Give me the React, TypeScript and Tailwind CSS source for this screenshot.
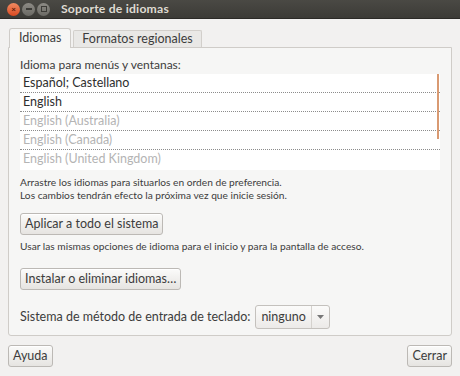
import React from 'react';

const font = { fontFamily: 'Lato, "Noto Sans", sans-serif' };

const langs = [
  { name: 'Español; Castellano', active: true },
  { name: 'English', active: true },
  { name: 'English (Australia)', active: false },
  { name: 'English (Canada)', active: false },
  { name: 'English (United Kingdom)', active: false },
];

const Button: React.FC<{ children: React.ReactNode; className?: string }> = ({ children, className = '' }) => (
  <button
    className={`h-[22px] px-[4px] text-[12.5px] text-[#3c3c3c] leading-none border border-[#bcb9b5] rounded-[3px] bg-gradient-to-b from-[#fbfbfa] to-[#e6e4e1] shadow-[inset_0_1px_0_#fff] ${className}`}
  >
    {children}
  </button>
);

export default function App() {
  return (
    <div className="w-[460px] h-[376px] bg-[#f2f1f0] flex flex-col overflow-hidden" style={font}>
      {/* Title bar */}
      <div className="h-[19px] bg-gradient-to-b from-[#4a4944] to-[#3c3b37] flex items-center pl-[7px] border-b border-[#2b2a27]">
        <div className="flex items-center gap-[2px]">
          <span className="w-[13px] h-[13px] rounded-full bg-gradient-to-b from-[#f08a60] to-[#d9481f] flex items-center justify-center text-[8px] leading-none text-[#5a1a08] font-bold">×</span>
          <span className="w-[13px] h-[13px] rounded-full bg-gradient-to-b from-[#8d8b85] to-[#6a6964] flex items-center justify-center">
            <span className="w-[6px] h-[2px] bg-[#3c3b37]" />
          </span>
          <span className="w-[13px] h-[13px] rounded-full bg-gradient-to-b from-[#8d8b85] to-[#6a6964] flex items-center justify-center">
            <span className="w-[6px] h-[6px] border border-[#3c3b37]" />
          </span>
        </div>
        <span className="ml-[11px] text-[12.2px] font-bold text-[#dfdbd2] tracking-[0.2px]">Soporte de idiomas</span>
      </div>

      {/* Tabs */}
      <div className="flex items-end pl-[9px] mt-[9px] h-[19px]">
        <div className="h-[20px] px-[9px] flex items-center text-[12.5px] text-[#3c3c3c] bg-[#f6f6f5] border border-b-0 border-[#cfccc8] rounded-t-[3px] relative z-10 -mb-px">
          Idiomas
        </div>
        <div className="h-[17px] ml-[2px] px-[8px] flex items-center text-[12.5px] text-[#3c3c3c] bg-[#e9e8e6] border border-b-0 border-[#d2cfcb] rounded-t-[2px]">
          Formatos regionales
        </div>
      </div>

      {/* Notebook panel */}
      <div className="mx-[8px] h-[289px] bg-[#f6f6f5] border border-[#cfccc8] rounded-b-[3px] px-[11px] pt-[10px] text-[#3c3c3c]">
        <div className="text-[12px] leading-[14px]">Idioma para menús y ventanas:</div>
        <div className="mt-[2px] bg-white relative h-[96px]">
          {langs.map((l, i) => (
            <div
              key={l.name}
              className={`h-[19px] pl-[3px] flex items-center text-[12.5px] ${l.active ? 'text-[#2e2e2e]' : 'text-[#b4b4b4]'} ${i < langs.length - 1 ? 'border-b border-dotted border-[#8c8c8c]' : ''}`}
            >
              {l.name}
            </div>
          ))}
          <div className="absolute right-[1px] top-0 w-[2px] h-[65px] bg-[#d99a72]" />
        </div>
        <div className="mt-[6px] text-[10.2px] leading-[13px]">
          <div>Arrastre los idiomas para situarlos en orden de preferencia.</div>
          <div>Los cambios tendrán efecto la próxima vez que inicie sesión.</div>
        </div>
        <Button className="mt-[11px]">Aplicar a todo el sistema</Button>
        <div className="mt-[5px] text-[10.2px] leading-[13px]">
          Usar las mismas opciones de idioma para el inicio y para la pantalla de acceso.
        </div>
        <div>
          <Button className="mt-[15px]">Instalar o eliminar idiomas…</Button>
        </div>
        <div className="mt-[15px] flex items-center text-[12.5px]">
          <span>Sistema de método de entrada de teclado:</span>
          <div className="ml-[5px] h-[24px] flex items-stretch border border-[#c4c1bd] rounded-[3px] bg-gradient-to-b from-[#fbfbfa] to-[#eceae8]">
            <span className="px-[5px] flex items-center text-[12.5px]">ninguno</span>
            <span className="w-[18px] border-l border-[#d5d2ce] flex items-center justify-center">
              <svg width="7" height="4" viewBox="0 0 7 4"><path d="M0 0h7L3.5 4z" fill="#777" /></svg>
            </span>
          </div>
        </div>
      </div>

      {/* Footer */}
      <div className="flex justify-between px-[8px] mt-[9px]">
        <Button className="h-[21px] px-[3px]">Ayuda</Button>
        <Button className="h-[21px] px-[3px]">Cerrar</Button>
      </div>
    </div>
  );
}
